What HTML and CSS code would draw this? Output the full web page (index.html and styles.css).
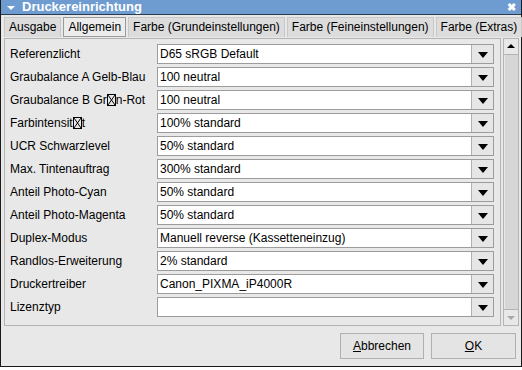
FILE: index.html
```html
<!DOCTYPE HTML>
<html>
<head>
    <meta charset="utf-8"/>
    <link rel="stylesheet" href="styles.css">
</head>
<body>
<div class="window">
    <div class="titlebar">
        <span class="menu-arrow"></span>
        <span class="title">Druckereinrichtung</span>
        <span class="close">&#x2716;</span>
    </div>

    <div class="tabs">
        <div class="tab">Ausgabe</div>
        <div class="tab active">Allgemein</div>
        <div class="tab">Farbe (Grundeinstellungen)</div>
        <div class="tab">Farbe (Feineinstellungen)</div>
        <div class="tab">Farbe (Extras)</div>
    </div>

    <div class="content">
        <div class="panel">
            <div class="label">Referenzlicht</div>
            <div class="combo"><span class="value">D65 sRGB Default</span><span class="drop"></span></div>

            <div class="label">Graubalance A Gelb-Blau</div>
            <div class="combo"><span class="value">100 neutral</span><span class="drop"></span></div>

            <div class="label">Graubalance B Gr<svg class="nochar" width="9" height="12" viewBox="0 0 9 12"><rect x="0.5" y="0.5" width="8" height="11" fill="none" stroke="#000"/><path d="M1 1 L8 11 M8 1 L1 11" stroke="#000"/></svg>n-Rot</div>
            <div class="combo"><span class="value">100 neutral</span><span class="drop"></span></div>

            <div class="label">Farbintensit<svg class="nochar" width="9" height="12" viewBox="0 0 9 12"><rect x="0.5" y="0.5" width="8" height="11" fill="none" stroke="#000"/><path d="M1 1 L8 11 M8 1 L1 11" stroke="#000"/></svg>t</div>
            <div class="combo"><span class="value">100% standard</span><span class="drop"></span></div>

            <div class="label">UCR Schwarzlevel</div>
            <div class="combo"><span class="value">50% standard</span><span class="drop"></span></div>

            <div class="label">Max. Tintenauftrag</div>
            <div class="combo"><span class="value">300% standard</span><span class="drop"></span></div>

            <div class="label">Anteil Photo-Cyan</div>
            <div class="combo"><span class="value">50% standard</span><span class="drop"></span></div>

            <div class="label">Anteil Photo-Magenta</div>
            <div class="combo"><span class="value">50% standard</span><span class="drop"></span></div>

            <div class="label">Duplex-Modus</div>
            <div class="combo"><span class="value">Manuell reverse (Kassetteneinzug)</span><span class="drop"></span></div>

            <div class="label">Randlos-Erweiterung</div>
            <div class="combo"><span class="value">2% standard</span><span class="drop"></span></div>

            <div class="label">Druckertreiber</div>
            <div class="combo"><span class="value">Canon_PIXMA_iP4000R</span><span class="drop"></span></div>

            <div class="label">Lizenztyp</div>
            <div class="combo"><span class="value"></span><span class="drop"></span></div>
        </div>

        <div class="scrollbar">
            <div class="sb-btn up"></div>
            <div class="sb-thumb"></div>
            <div class="sb-btn down"></div>
        </div>
    </div>

    <div class="buttons">
        <div class="button"><u>A</u>bbrechen</div>
        <div class="button ok"><u>O</u>K</div>
    </div>
</div>
</body>
</html>
```

FILE: styles.css
```css
body {
    margin: 0;
    padding: 0;
    background: #ffffff;
    font-family: "Liberation Sans", Arial, sans-serif;
    font-size: 12px;
    color: #000;
}

.window {
    width: 520px;
    height: 366px;
    border: 1px solid #1a1a1a;
    border-top: 0;
    background: #e8e8e8;
    display: flex;
    flex-direction: column;
}

.titlebar {
    height: 14px;
    background: #6e9cd0;
    border-bottom: 1px solid #2a3a50;
    display: flex;
    align-items: center;
    color: #fff;
    overflow: hidden;
}

.menu-arrow {
    width: 0;
    height: 0;
    margin: 1px 7px 0 6px;
    border-left: 4px solid transparent;
    border-right: 4px solid transparent;
    border-top: 4px solid #fff;
}

.title {
    font-weight: bold;
    font-size: 13px;
    line-height: 13px;
    margin-top: -1px;
    flex: 1;
}

.close {
    font-size: 11px;
    font-weight: bold;
    margin-right: 5px;
}

.tabs {
    display: flex;
    gap: 2px;
    padding: 2px 3px 0 3px;
    height: 21px;
}

.tab {
    height: 19px;
    padding: 0 4px;
    line-height: 19px;
    background: #dcdcdc;
    border: 1px solid #c8c8c8;
    border-bottom: 0;
    white-space: nowrap;
}

.tab.active {
    background: #ececec;
    border: 1px solid #9a9a9a;
    height: 18px;
    line-height: 18px;
}

.content {
    display: flex;
    gap: 2px;
    padding: 0 2px 0 3px;
    height: 288px;
}

.panel {
    width: 485px;
    border: 1px solid #b4b4b4;
    padding: 5px 6px 0 5px;
    display: grid;
    grid-template-columns: 147px 337px;
    grid-auto-rows: 20px;
    row-gap: 3px;
    overflow: hidden;
}

.label {
    line-height: 20px;
    white-space: nowrap;
}

.nochar {
    vertical-align: -2px;
}

.combo {
    display: flex;
    background: #fff;
    border: 1px solid #9c9c9c;
    box-sizing: border-box;
}

.combo .value {
    flex: 1;
    padding-left: 2px;
    line-height: 18px;
    white-space: nowrap;
    overflow: hidden;
}

.combo .drop {
    width: 21px;
    background: #e6e6e6;
    border-left: 1px solid #b0b0b0;
    position: relative;
}

.combo .drop::after {
    content: "";
    position: absolute;
    left: 6px;
    top: 7px;
    border-left: 5px solid transparent;
    border-right: 5px solid transparent;
    border-top: 6px solid #000;
}

.scrollbar {
    width: 14px;
    border: 1px solid #b4b4b4;
    display: flex;
    flex-direction: column;
    background: #d8d8d8;
}

.sb-btn {
    height: 15px;
    background: #e8e8e8;
    border-bottom: 1px solid #b4b4b4;
    position: relative;
}

.sb-btn.down {
    border-bottom: 0;
    border-top: 1px solid #b4b4b4;
}

.sb-btn::after {
    content: "";
    position: absolute;
    left: 3px;
    border-left: 4px solid transparent;
    border-right: 4px solid transparent;
}

.sb-btn.up::after {
    top: 5px;
    border-bottom: 4px solid #000;
}

.sb-btn.down::after {
    top: 6px;
    border-top: 4px solid #a8a8a8;
}

.sb-thumb {
    flex: 1;
    background: #d6d6d6;
    border-left: 1px solid #e8e8e8;
}

.buttons {
    flex: 1;
    display: flex;
    justify-content: flex-end;
    align-items: flex-start;
    gap: 7px;
    padding: 7px 5px 0 0;
}

.button {
    width: 82px;
    height: 24px;
    line-height: 24px;
    text-align: center;
    background: #e4e4e4;
    border: 1px solid #b0b0b0;
}

.button.ok {
    width: 83px;
}
```
